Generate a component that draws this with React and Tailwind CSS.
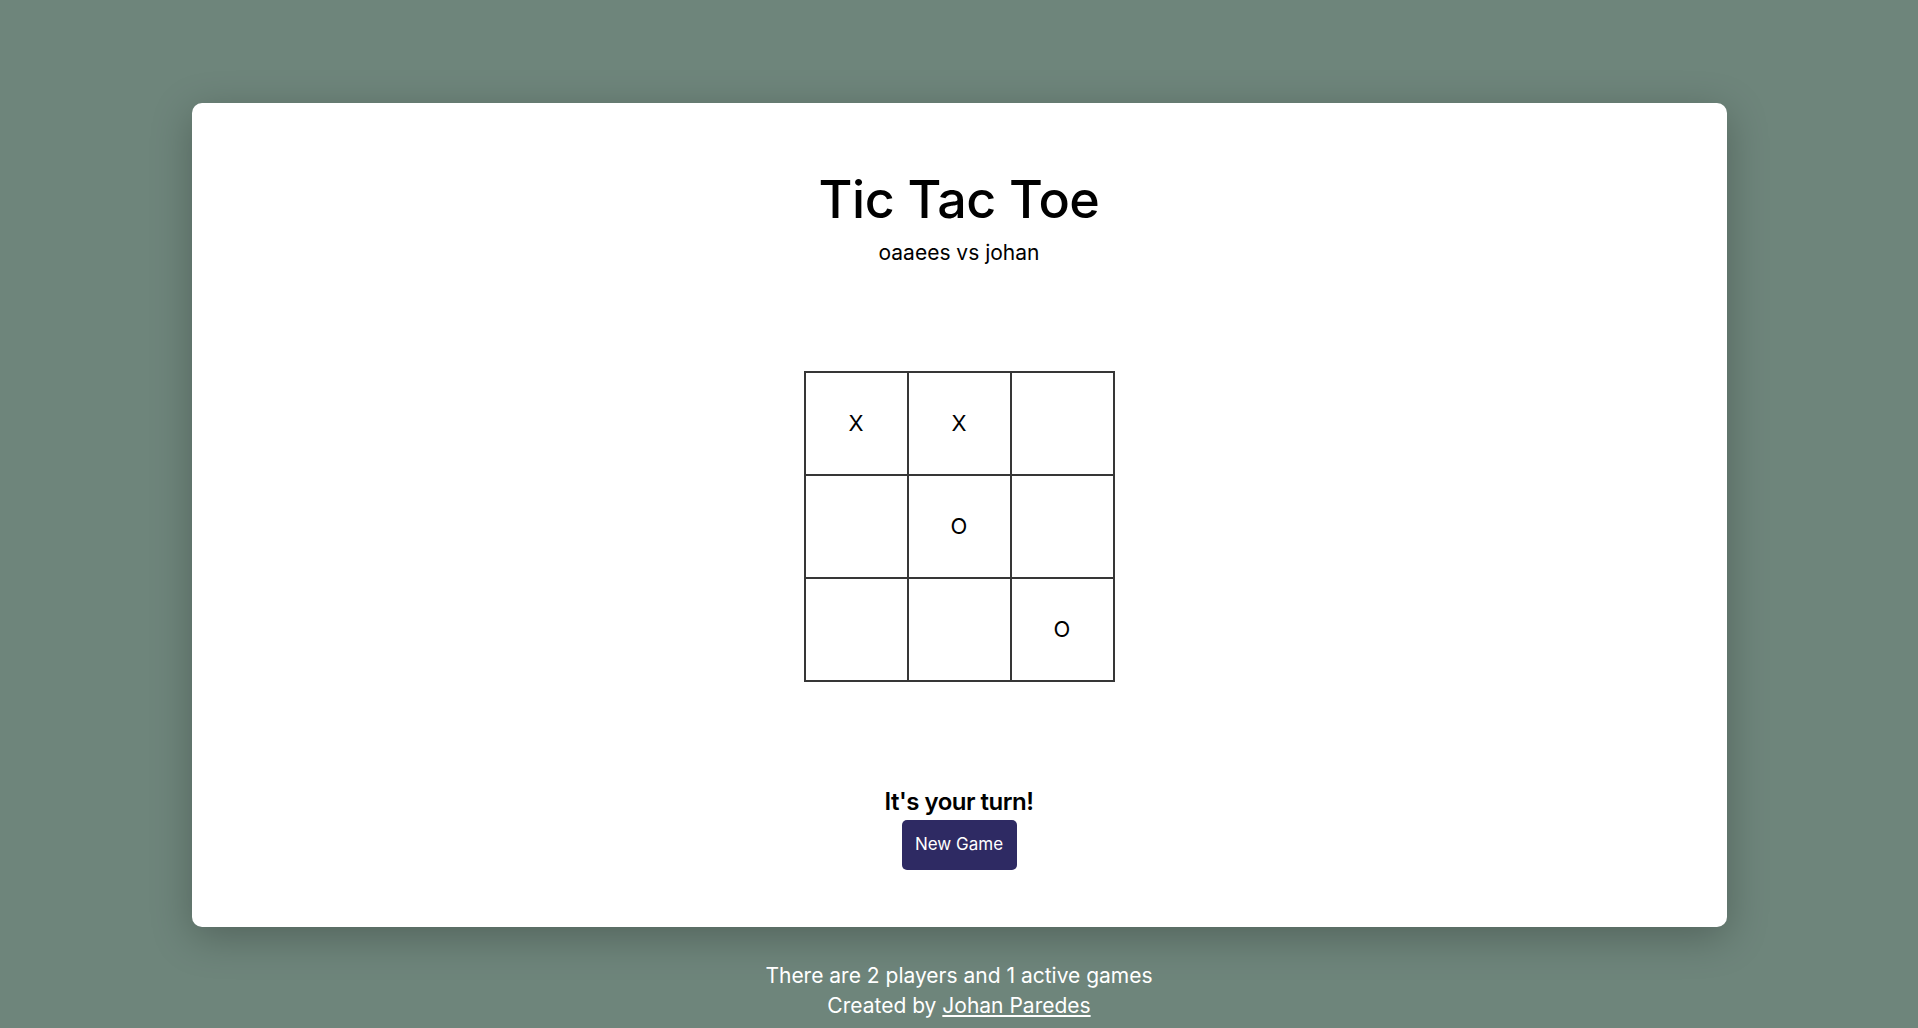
import React from 'react';

const board = ['X', 'X', '', '', 'O', '', '', '', 'O'];

export default function App() {
  return (
    <div
      className="min-h-[1028px] w-full bg-[#6e857b] flex flex-col items-center pt-[103px]"
      style={{ fontFamily: 'Inter, "Open Sans", sans-serif' }}
    >
      <div className="w-[1535px] h-[824px] bg-white rounded-[10px] shadow-[0_10px_40px_rgba(0,0,0,0.25)] flex flex-col items-center pt-[67px]">
        <h1 className="text-[52px] leading-[60px] font-medium text-black tracking-[-0.5px]">Tic Tac Toe</h1>
        <p className="mt-[8px] text-[21px] leading-[30px] text-black">oaaees vs johan</p>

        <div className="mt-[103px] grid grid-cols-3 gap-[2px] p-[2px] bg-[#363636]">
          {board.map((v, i) => (
            <div key={i} className="w-[101px] h-[101px] bg-white flex items-center justify-center text-[22px] text-black">
              {v}
            </div>
          ))}
        </div>

        <p className="mt-[104px] text-[24px] leading-[32px] font-semibold text-black tracking-[-0.5px]">It's your turn!</p>
        <button className="mt-[2px] w-[115px] h-[50px] rounded-[5px] bg-[#2e2a63] text-white text-[17px]">
          New Game
        </button>
      </div>

      <div className="mt-[34px] flex flex-col items-center text-white text-[21px] leading-[30px]">
        <p>There are 2 players and 1 active games</p>
        <p>
          Created by <a href="#" className="underline">Johan Paredes</a>
        </p>
      </div>
    </div>
  );
}
